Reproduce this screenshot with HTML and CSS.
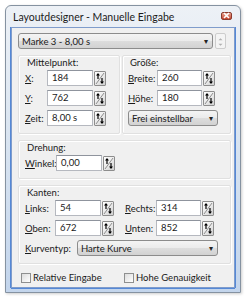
FILE: index.html
```html
<!DOCTYPE html>
<html lang="de">
<head>
    <meta charset="UTF-8">
    <title>Layoutdesigner - Manuelle Eingabe</title>
    <link rel="stylesheet" href="styles.css">
</head>
<body>
    <div class="window">
        <div class="titlebar">
            <span class="title">Layoutdesigner - Manuelle Eingabe</span>
            <span class="close">
                <svg width="9" height="7" viewBox="0 0 9 7"><path d="M2 1 L7 6 M7 1 L2 6" stroke="#fff" stroke-width="1.6"/></svg>
            </span>
        </div>
        <div class="client">
            <div class="top-row">
                <div class="combo wide"><span>Marke 3 - 8,00 s</span><span class="arrow">&#9662;</span></div>
                <div class="updown">
                    <svg width="11" height="16" viewBox="0 0 11 16"><path d="M3 6 L5.5 3.5 L8 6 Z M3 10 L5.5 12.5 L8 10 Z" fill="#b0b0b0"/></svg>
                </div>
            </div>

            <div class="groups-top">
                <div class="group mitte">
                    <div class="group-title">Mittelpunkt:</div>
                    <div class="row"><label class="lbl l-x"><u>X</u>:</label><div class="field f-mid">184</div><span class="spin"></span></div>
                    <div class="row"><label class="lbl l-x"><u>Y</u>:</label><div class="field f-mid">762</div><span class="spin"></span></div>
                    <div class="row"><label class="lbl l-x"><u>Z</u>eit:</label><div class="field f-mid">8,00 s</div><span class="spin"></span></div>
                </div>
                <div class="group groesse">
                    <div class="group-title">Größe:</div>
                    <div class="row"><label class="lbl l-r"><u>B</u>reite:</label><div class="field f-r">260</div><span class="spin"></span></div>
                    <div class="row"><label class="lbl l-r"><u>H</u>öhe:</label><div class="field f-r">180</div><span class="spin"></span></div>
                    <div class="row"><div class="combo frei"><span>Frei einstellbar</span><span class="arrow">&#9662;</span></div></div>
                </div>
            </div>

            <div class="group drehung">
                <div class="group-title">Drehung:</div>
                <div class="row"><label class="lbl l-w"><u>W</u>inkel:</label><div class="field f-w">0,00</div><span class="spin"></span></div>
            </div>

            <div class="group kanten">
                <div class="group-title">Kanten:</div>
                <div class="row">
                    <label class="lbl l-k"><u>L</u>inks:</label><div class="field f-k">54</div><span class="spin"></span>
                    <label class="lbl l-kr"><u>R</u>echts:</label><div class="field f-r">314</div><span class="spin"></span>
                </div>
                <div class="row">
                    <label class="lbl l-k"><u>O</u>ben:</label><div class="field f-k">672</div><span class="spin"></span>
                    <label class="lbl l-kr"><u>U</u>nten:</label><div class="field f-r">852</div><span class="spin"></span>
                </div>
                <div class="row">
                    <label class="lbl l-kt"><u>K</u>urventyp:</label><div class="combo kurve"><span>Harte Kurve</span><span class="arrow">&#9662;</span></div>
                </div>
            </div>

            <div class="checks">
                <div class="check c-left"><span class="box"></span>Relative Eingabe</div>
                <div class="check"><span class="box"></span>Hohe Genauigkeit</div>
            </div>
        </div>
    </div>
</body>
</html>
```

FILE: styles.css
```css
*{
    box-sizing: border-box;
}

body{
    margin: 0;
    background-color: #ffffff;
    font-family: Lato, "Liberation Sans", sans-serif;
    font-size: 9.5px;
    color: #1a1a1a;
}

.window{
    margin: 5px;
    width: 236px;
    height: 288px;
    border: 1px solid #8592a1;
    border-radius: 6px 6px 0 0;
    padding: 0 5px 4px 5px;
    background: linear-gradient(to bottom, #edf1f6 0%, #dce6f1 40%, #c3d5ec 100%);
    box-shadow: 1px 1px 3px rgba(0,0,0,0.2);
    display: flex;
    flex-direction: column;
}

.titlebar{
    height: 21px;
    display: flex;
    align-items: center;
    justify-content: space-between;
    padding-left: 2px;
}

.title{
    font-size: 10.5px;
    color: #1c1c1c;
}

.close{
    width: 11px;
    height: 8px;
    margin-right: 3px;
    margin-top: -2px;
    background: linear-gradient(to bottom, #e8a592, #c6452f);
    border: 1px solid #8a3b2e;
    border-radius: 2px;
    display: flex;
    align-items: center;
    justify-content: center;
}

.client{
    flex: 1;
    background-color: #f0f0f0;
    border: 1px solid #7f9ccb;
    box-shadow: -1px 0 0 #5588d6, 1px 0 0 #5588d6, 0 1px 0 #5588d6;
    padding: 5px 0 0 6px;
}

.top-row{
    display: flex;
    align-items: center;
    gap: 2px;
    height: 16px;
}

.combo{
    height: 16px;
    border: 1px solid #8c8c8c;
    border-radius: 3px;
    background: linear-gradient(to bottom, #f4f4f4 0%, #ebebeb 50%, #dddddd 51%, #d2d2d2 100%);
    display: flex;
    align-items: center;
    justify-content: space-between;
    padding: 0 4px 0 3px;
}

.combo .arrow{
    font-size: 8px;
    color: #222;
}

.wide{
    width: 195px;
}

.updown{
    width: 11px;
    height: 16px;
    border: 1px solid #cdcdcd;
    border-radius: 2px;
    background-color: #f4f4f4;
    display: flex;
}

.groups-top{
    display: flex;
    margin-top: 6px;
}

.group{
    border: 1px solid #e0e0e0;
    box-shadow: inset 1px 1px 0 #ffffff, 1px 1px 0 #ffffff;
    border-radius: 2px;
    padding: 1px 0 3px 6px;
}

.group-title{
    height: 13px;
    padding-left: 2px;
}

.mitte{
    width: 102px;
}

.groesse{
    width: 109px;
    margin-left: 2px;
    padding-left: 5px;
}

.drehung{
    width: 213px;
    margin-top: 6px;
}

.kanten{
    width: 213px;
    margin-top: 6px;
}

.row{
    display: flex;
    align-items: center;
    height: 16px;
    margin-bottom: 4px;
}

.lbl{
    display: block;
    white-space: nowrap;
}

.l-x{
    width: 22px;
}

.l-r{
    width: 29px;
}

.l-w{
    width: 31px;
}

.l-k{
    width: 30px;
}

.l-kr{
    width: 31px;
    margin-left: 11px;
}

.l-kt{
    width: 52px;
}

.field{
    height: 16px;
    background-color: #ffffff;
    border: 1px solid #b5b8bf;
    border-top-color: #8f949d;
    padding: 0 4px;
    line-height: 14px;
}

.f-mid{
    width: 46px;
}

.f-r{
    width: 45px;
}

.f-w{
    width: 46px;
}

.f-k{
    width: 46px;
}

.spin{
    width: 12px;
    height: 15px;
    margin-left: 1px;
    border: 1px solid #8d8d8d;
    border-radius: 1px;
    background:
        url("data:image/svg+xml;utf8,<svg xmlns='http://www.w3.org/2000/svg' width='10' height='13'><path d='M1 12 L9 1' stroke='%23777' stroke-width='0.8'/><path d='M3 1 L5 3.5 L3.6 3.5 L3.6 7 L2.4 7 L2.4 3.5 L1 3.5 Z' fill='%23000'/><path d='M7 12 L5 9.5 L6.4 9.5 L6.4 6 L7.6 6 L7.6 9.5 L9 9.5 Z' fill='%23000'/></svg>") no-repeat center,
        linear-gradient(135deg, #ffffff 0%, #e6e6e6 60%, #cfcfcf 100%);
}

.frei{
    width: 90px;
}

.kurve{
    width: 141px;
}

.checks{
    display: flex;
    margin-top: 8px;
    padding-left: 3px;
}

.check{
    display: flex;
    align-items: center;
}

.c-left{
    width: 103px;
}

.box{
    width: 10px;
    height: 10px;
    border: 1px solid #8e8f8f;
    background: linear-gradient(135deg, #dcdcdc, #ffffff);
    margin-right: 2px;
}
```
